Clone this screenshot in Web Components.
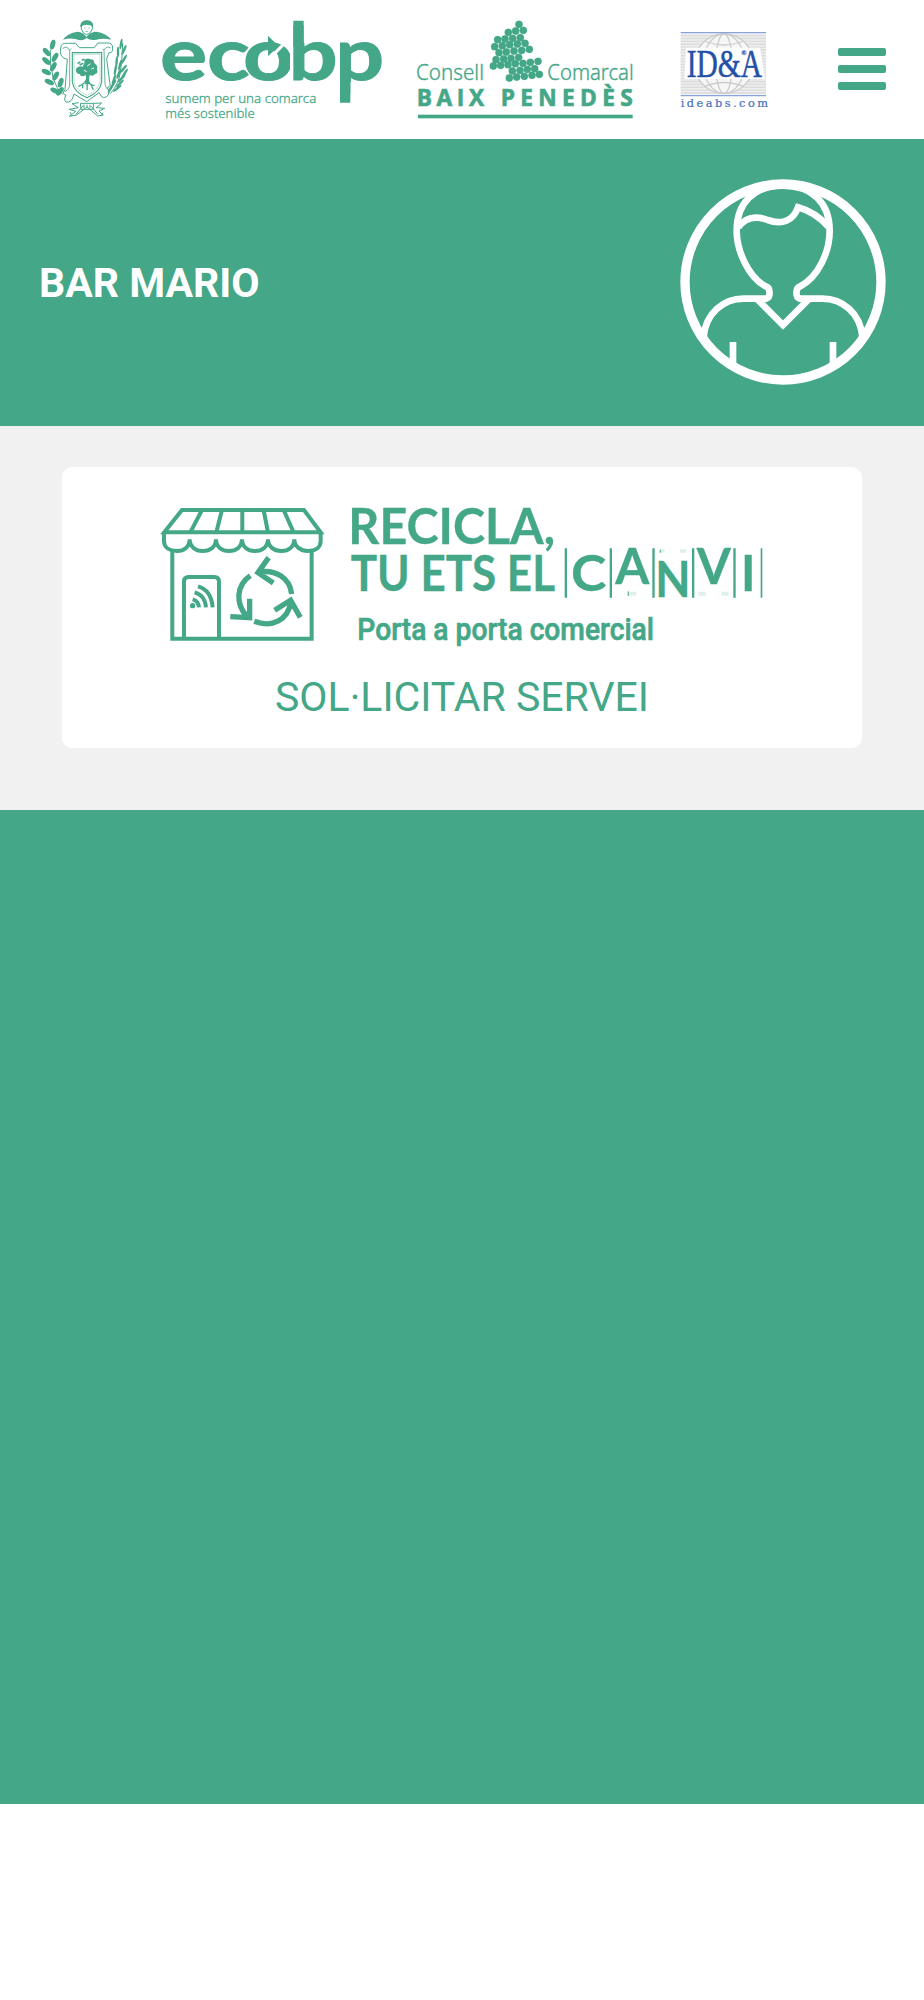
<!DOCTYPE html>
<html lang="ca">
<head>
<meta charset="utf-8">
<title>ecobp</title>
<style>
  html { --green: #44a787; --grey: #f1f1f1; }
  body { margin: 0; background: #fff; color: var(--green); font-family: Roboto, "Liberation Sans", sans-serif; }
</style>
</head>
<body>
<eco-app></eco-app>

<script>
// small helper: every component gets an open shadow root with its own styles
class BaseElement extends HTMLElement {
  connectedCallback() {
    this.attachShadow({ mode: 'open' }).innerHTML = this.render();
  }
}

class CrestLogo extends BaseElement {
  render() {
    // the left branch has broad leaves, the right one is a palm
    const leaves = [[75,242,25],[92,218,-70],[58,216,25],[77,198,-60],[49,186,25],[70,170,-60],[49,153,40],[75,142,-60],[50,126,50],[68,104,-75],[90,244,-50]];
    const palm = [[242,235,-60],[262,235,-40],[252,208,-70],[275,205,-45],[256,180,-80],[280,177,-50],[260,154,-85],[282,148,-60],[264,126,-90],[282,120,-65],[273,102,-80],[250,222,-60],[270,220,-45],[266,192,-70],[284,190,-55],[270,165,-75]];
    return `
      <style>
        :host { display: block; width: 110px; height: 120px; }
        svg { display: block; width: 100%; height: 100%; }
      </style>
      <svg viewBox="0 0 330 360" fill="none" stroke="#44a787" stroke-width="3">
        <path fill="#44a787" stroke="none" d="M99 89Q112 69 143 65Q158 66 169 80Q183 65 199 65Q228 69 244 89Q220 83 199 89Q181 93 170 84Q157 95 139 88Q120 83 99 89Z"/>
        <path d="M154 57Q150 35 170 34Q191 35 187 57Q181 73 170 74Q159 73 154 57Z" fill="#fff"/>
        <path d="M153 51Q150 33 170 32Q190 32 188 51Q184 42 170 43Q157 42 153 51Z" fill="#44a787"/>
        <path d="M163 54h4M175 54h4M166 65h8" stroke-width="2"/>
        <path d="M92 114Q93 98 112 100H137L148 113H193L204 99H230Q248 97 248 114Q249 130 237 128L230 146L239 216Q244 229 232 233Q242 246 234 256Q219 273 207 248L170 275L132 252Q126 280 108 276Q100 270 108 255Q94 254 105 239L112 148L101 144Q88 136 92 114Z"/>
        <path d="M98 116Q111 105 119 121L124 116M119 121V228Q116 240 105 245M242 114Q231 106 222 120L218 116M222 120L225 223Q228 235 234 239" stroke-width="2.5"/>
        <path d="M127 128H215V216Q211 246 171 263Q131 247 127 216Z" stroke-width="3.5"/>
        <path d="M132 133H210V215Q205 240 171 256Q136 240 132 215Z" stroke-width="1"/>
        <path fill="#44a787" stroke="none" d="M138 176Q146 165 158 170Q166 160 163 150Q172 142 181 148Q192 146 193 160Q205 166 201 178Q206 190 195 192Q190 201 179 195L177 209L181 223H165L169 210L167 195Q153 204 149 192Q136 191 138 176Z"/>
        <path d="M143 161l8-5m4-5l9-3m-15 17l11-5" stroke-width="5"/>
        <path d="M172 168l9-7m-19 20l8 4m14-8l8-3" stroke="#fff" stroke-width="3"/>
        <path d="M170 205Q169 220 145 229M174 205Q171 220 171 241M175 216Q179 224 194 227M158 225L158 235M182 222L190 239" stroke-width="4"/>
        <path d="M98 252Q80 239 69 201T61 119M241 251Q266 222 271 188T278 99"/>
        <g fill="#44a787" stroke="none">
          ${leaves.map(([x, y, r]) => `<ellipse cx="${x}" cy="${y}" rx="15" ry="7.5" transform="rotate(${r} ${x} ${y})"/>`).join('')}
          ${palm.map(([x, y, r]) => `<ellipse cx="${x}" cy="${y}" rx="16" ry="3.6" transform="rotate(${r} ${x} ${y})"/>`).join('')}
        </g>
        <path d="M146 278L126 281L145 293L117 298L137 304L118 319L140 315L171 291L203 318L220 315L207 303L224 295L199 293L215 279L190 280M151 280H190V298H153ZM162 284V295M171 284V294M180 284V295M138 313L160 286M203 312L184 289M126 317L120 306M214 317L219 308"/>
      </svg>`;
  }
}

class EcobpLogo extends BaseElement {
  render() {
    return `
      <style>
        :host { display: block; width: 250px; height: 125px; }
        svg { display: block; width: 100%; height: 100%; overflow: visible; }
      </style>
      <svg viewBox="0 0 750 375" fill="#44a787">
        <text transform="scale(1.2 1)" x="25 142.5 232.5 343.5 460" y="210" font-family="Lato, sans-serif" font-size="221" font-weight="700" stroke="#44a787" stroke-width="3">ecobp</text>
        <!-- straight stems with flat ends for the b and the p -->
        <path d="M420 20h10v195h-10zM461 20h14v78h-14zM561 90h9v195h-9zM601 216h14v70h-14z" fill="#fff"/>
        <path d="M430 32h31v78h-31zM570 200h31v78h-31z"/>
        <path d="M364 140L403 101" stroke="#fff" stroke-width="9"/>
        <path d="M354 77L386 109L354 139Z"/>
        <g font-family="'Noto Sans', sans-serif" font-size="39" font-weight="300" stroke="#44a787" stroke-width=".8">
          <text x="46" y="280" textLength="453" lengthAdjust="spacingAndGlyphs">sumem per una comarca</text>
          <text x="46" y="324" textLength="268" lengthAdjust="spacingAndGlyphs">més sostenible</text>
        </g>
      </svg>`;
  }
}

class ConsellLogo extends BaseElement {
  render() {
    const grapes = [
      [357,43],[370,61],[347,63],[325,67],[361,83],[338,85],[315,87],[293,89],[375,100],[352,102],
      [329,104],[307,107],[284,110],[388,118],[365,121],[342,123],[319,126],[297,128],[356,142],[333,145],
      [311,147],[288,149],[280,168],[302,166],[324,164],[346,161],[369,160],[391,157],[414,154],[337,183],
      [360,181],[382,178],[404,176],[328,204],[350,201],[373,199],[396,196],[418,193]
    ];
    return `
      <style>
        :host { display: block; width: 250px; height: 125px; }
        svg { display: block; width: 100%; height: 100%; overflow: visible; }
      </style>
      <svg viewBox="0 0 750 375" fill="#44a787">
        <g stroke="#44a787" stroke-opacity=".35" stroke-width="2">
          ${grapes.map(([x, y]) => `<circle cx="${x}" cy="${y}" r="11"/>`).join('')}
        </g>
        <g font-family="'Noto Sans', sans-serif" font-size="64" font-weight="300" stroke="#44a787" stroke-width="1">
          <text x="48" y="209" textLength="204" lengthAdjust="spacingAndGlyphs">Consell</text>
          <text x="442" y="209" textLength="259" lengthAdjust="spacingAndGlyphs">Comarcal</text>
        </g>
        <g font-family="'Open Sans', sans-serif" font-size="68" font-weight="700" stroke="#44a787" stroke-width="2">
          <text x="50" y="288" textLength="202">BAIX</text>
          <text x="302" y="288" textLength="396">PENEDÈS</text>
        </g>
        <rect x="54" y="314" width="644" height="11"/>
      </svg>`;
  }
}

class IdeabsLogo extends BaseElement {
  render() {
    let stripes = '';
    for (let y = 77; y < 252; y += 8.6) stripes += `M62 ${y}H318`;
    return `
      <style>
        :host { display: block; width: 110px; height: 125px; }
        svg { display: block; width: 100%; height: 100%; overflow: visible; }
      </style>
      <svg viewBox="0 0 330 375" fill="none">
        <path d="M62 70H318V254H62Z" fill="#eee"/>
        <path d="${stripes}" stroke="#dcdcdc" stroke-width="4"/>
        <g stroke="#ccc" stroke-width="4">
          <circle cx="192" cy="161" r="89" fill="#f6f6f6"/>
          <ellipse cx="192" cy="161" rx="62" ry="89"/>
          <ellipse cx="192" cy="161" rx="25" ry="89"/>
          <path d="M134 93Q192 117 250 93M134 229Q192 206 250 229"/>
        </g>
        <path d="M78 113H300L315 207H73Z" fill="#fff"/>
        <path d="M62 68H318M62 257H318" stroke="#89a4db" stroke-width="4"/>
        <text x="80" y="201" font-family="'Liberation Serif', serif" font-size="120" fill="#2451a8" stroke="#2451a8" stroke-width="1.5" textLength="226" lengthAdjust="spacingAndGlyphs">ID&amp;A</text>
        <circle cx="252" cy="128" r="8" fill="#9aafdb"/>
        <path d="M249 132V124H254L250 129L255 132" stroke="#2451a8" stroke-width="2"/>
        <text x="62" y="290" font-family="'DejaVu Serif', serif" font-size="34" fill="#4a6fbd" stroke="#4a6fbd" stroke-width=".6" textLength="262">ideabs.com</text>
      </svg>`;
  }
}

class MenuButton extends BaseElement {
  render() {
    return `
      <style>
        :host { display: block; }
        button {
          display: flex;
          flex-direction: column;
          gap: 9.3px;
          padding: 0;
          border: 0;
          background: none;
        }
        span { width: 48px; height: 8px; border-radius: 2px; background: var(--green); }
      </style>
      <button aria-label="Menú"><span></span><span></span><span></span></button>`;
  }
}

class SiteHeader extends BaseElement {
  render() {
    return `
      <style>
        :host {
          display: flex;
          align-items: flex-start;
          box-sizing: border-box;
          height: 138.5px;
          padding: 10px 38px 0 30px;
          background: #fff;
        }
        crest-logo, consell-logo { margin-right: 10px; }
        menu-button { margin: 37.5px 0 0 auto; }
      </style>
      <crest-logo></crest-logo>
      <ecobp-logo></ecobp-logo>
      <consell-logo></consell-logo>
      <ideabs-logo></ideabs-logo>
      <menu-button></menu-button>`;
  }
}

class UserAvatar extends BaseElement {
  render() {
    return `
      <style>
        :host { display: block; width: 206px; height: 206px; }
        svg { display: block; width: 100%; height: 100%; }
      </style>
      <svg viewBox="59 58 618 618" fill="none" stroke="#fff" stroke-width="20">
        <circle cx="368" cy="367" r="294" stroke-width="28"/>
        <path d="M130 532C136 460 190 417 250 417H318C331 413 331 386 318 381C262 352 229 270 229 213C229 130 280 78 368 78C456 78 508 130 508 213C508 275 475 352 418 381C405 386 405 413 418 417H486C546 417 600 460 606 532"/>
        <path d="M289 417L368 496L447 417"/>
        <path d="M234 203C257 170 290 169 322 181C368 197 399 181 413 143C447 152 476 170 505 202"/>
        <path d="M218 547V612M518 547V612"/>
      </svg>`;
  }
}

class UserBanner extends BaseElement {
  render() {
    return `
      <style>
        :host {
          display: flex;
          align-items: center;
          justify-content: space-between;
          box-sizing: border-box;
          height: 287.5px;
          padding: 0 38px;
          background: var(--green);
          color: #fff;
        }
        h1 { margin: 1px 0 0 1px; font-size: 41px; line-height: 48px; font-weight: 700; }
      </style>
      <h1><slot></slot></h1>
      <user-avatar></user-avatar>`;
  }
}

class CampaignLogo extends BaseElement {
  render() {
    return `
      <style>
        :host { display: block; width: 615px; height: 150px; }
        svg { display: block; width: 100%; height: 100%; overflow: visible; }
      </style>
      <svg viewBox="155 500 615 150" fill="#44a787">
        <!-- shop with awning, door and arrows -->
        <g transform="translate(50.3 455) scale(.33333)" fill="none" stroke="#44a787" stroke-width="12">
          <path d="M395 165H761L811 232H342Z"/>
          <path d="M455 165L420 232M515 165L498 232M576 165V232M640 165L653 232M700 165L730 232"/>
          <path d="M341 230V258C341 279 360 288 380 288C402 288 418 275 418 253C418 275 436 288 457 288C480 288 497 275 497 253C497 275 514 288 536 288C558 288 575 275 575 253C575 275 592 288 614 288C636 288 653 275 653 253C653 275 671 288 693 288C715 288 732 275 732 253C732 275 751 288 773 288C796 288 811 277 811 258V230"/>
          <path d="M366 285V551H784V285"/>
          <path d="M401 551V380Q401 366 415 366H492Q506 366 506 380V551"/>
          <circle cx="427" cy="452" r="8" fill="#44a787" stroke="none"/>
          <path d="M427 433Q444 437 446 457M433 412Q464 420 467 457M443 394Q483 405 487 457" stroke-width="12"/>
          <g stroke-width="16">
            <path d="M724 417C719 369 676 341 621 352M655 308L623 353L669 384"/>
            <path d="M600 362C557 392 555 447 590 484M598 431V488L540 485"/>
            <path d="M612 499C667 520 713 494 722 441M673 466L721 436L750 487"/>
          </g>
        </g>
        <g transform="translate(335 490) scale(.33333)" stroke="#44a787">
          <g font-family="Lato, sans-serif" font-weight="700" font-size="147" stroke-width="1">
            <text x="40" y="162" textLength="620" lengthAdjust="spacingAndGlyphs">RECICLA,</text>
            <text x="47" y="302" textLength="613" lengthAdjust="spacingAndGlyphs">TU ETS EL</text>
          </g>
          <text x="67" y="449" font-family="Roboto, sans-serif" font-weight="500" font-size="93" stroke-width="2" textLength="890" lengthAdjust="spacingAndGlyphs">Porta a porta comercial</text>
        </g>
        <!-- slot-machine letters, each on its own height -->
        <g transform="translate(550 490) scale(.33333)">
          <path d="M44 175h7v148h-7zM179 175h7v148h-7zM307 175h7v148h-7zM426 175h7v148h-7zM550 175h7v148h-7zM632 175h5v148h-5z"/>
          <path d="M232 305h27v12h-27zM445 305h22v12h-22zM514 305h22v12h-22zM329 178h15v10h-15zM390 178h19v10h-19z" opacity=".17"/>
          <path d="M233 304h4v14h-4zM329 179h4v9h-4z" opacity=".7"/>
          <g font-family="Lato, sans-serif" font-weight="700" font-size="147" text-anchor="middle" stroke="#44a787" stroke-width="1">
            <text x="116" y="302" textLength="106" lengthAdjust="spacingAndGlyphs">C</text>
            <text x="247" y="282">A</text>
            <text x="369" y="322" textLength="106" lengthAdjust="spacingAndGlyphs">N</text>
            <text x="491" y="281">V</text>
            <text x="595" y="302">I</text>
          </g>
        </g>
      </svg>`;
  }
}

class ServiceCard extends BaseElement {
  render() {
    return `
      <style>
        :host {
          display: flex;
          flex-direction: column;
          align-items: center;
          box-sizing: border-box;
          height: 281px;
          padding-top: 33px;
          border-radius: 10px;
          background: #fff;
        }
        p { margin: 23px 0 0; font-size: 41px; line-height: 48px; }
      </style>
      <campaign-logo></campaign-logo>
      <p><slot></slot></p>`;
  }
}

class EcoApp extends BaseElement {
  render() {
    return `
      <style>
        :host { display: block; height: 2000px; background: #fff; }
        section {
          box-sizing: border-box;
          height: 383.5px;
          padding: 41px 61.6px 0;
          background: var(--grey);
        }
        footer { height: 994.5px; background: var(--green); }
      </style>
      <site-header></site-header>
      <user-banner>BAR MARIO</user-banner>
      <section>
        <service-card>SOL·LICITAR SERVEI</service-card>
      </section>
      <footer></footer>`;
  }
}

customElements.define('crest-logo', CrestLogo);
customElements.define('ecobp-logo', EcobpLogo);
customElements.define('consell-logo', ConsellLogo);
customElements.define('ideabs-logo', IdeabsLogo);
customElements.define('menu-button', MenuButton);
customElements.define('site-header', SiteHeader);
customElements.define('user-avatar', UserAvatar);
customElements.define('user-banner', UserBanner);
customElements.define('campaign-logo', CampaignLogo);
customElements.define('service-card', ServiceCard);
customElements.define('eco-app', EcoApp);
</script>
</body>
</html>
